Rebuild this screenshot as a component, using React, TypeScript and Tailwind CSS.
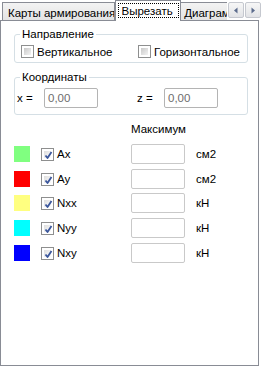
import React from 'react';

const Check: React.FC<{ checked?: boolean }> = ({ checked }) => (
    <span className="relative flex w-[13px] h-[13px] shrink-0 border border-[#8e8f8f] bg-white p-[2px]">
        <span className={`flex-1 bg-linear-to-br ${checked ? 'from-[#dedede] to-[#fbfbfb]' : 'from-[#c9c9c9] to-[#f3f3f3]'}`}></span>
        {checked && (
            <svg className="absolute inset-0" viewBox="0 0 13 13" width={13} height={13}>
                <path d="M3.5 6.5 L5.5 9 L9.5 3" fill="none" stroke="#3a569c" strokeWidth={1.8} strokeLinejoin="round" />
            </svg>
        )}
    </span>
);

const ArrowButton: React.FC<{ dir: 'left' | 'right' }> = ({ dir }) => (
    <div className="w-[16px] h-[16px] flex items-center justify-center border border-[#c5c8cf] rounded-[2px] bg-linear-to-b from-[#f7f7f7] to-[#e2e3e6]">
        <svg width={6} height={7} viewBox="0 0 6 7">
            {dir === 'left'
                ? <path d="M4.5 0.5 L1 3.5 L4.5 6.5 Z" fill="#5b6b8c" />
                : <path d="M1.5 0.5 L5 3.5 L1.5 6.5 Z" fill="#5b6b8c" />}
        </svg>
    </div>
);

const rows = [
    { color: 'bg-[#80ff80]', label: 'Ax', unit: 'см2', mt: 'mt-0' },
    { color: 'bg-[#ff0000]', label: 'Ay', unit: 'см2', mt: 'mt-[5px]' },
    { color: 'bg-[#ffff80]', label: 'Nxx', unit: 'кН', mt: 'mt-[4px]' },
    { color: 'bg-[#00ffff]', label: 'Nyy', unit: 'кН', mt: 'mt-[5px]' },
    { color: 'bg-[#0000ff]', label: 'Nxy', unit: 'кН', mt: 'mt-[5px]' },
];

const CoordInput: React.FC = () => (
    <div className="w-[54px] h-[20px] border border-[#b4b4b4] rounded-[2px] bg-white px-[3px] flex items-center text-[#6d6d6d]">
        0,00
    </div>
);

export default function App() {
    return (
        <div className="w-[261px] h-[367px] bg-white text-black text-[11.5px] leading-[14px] font-['Liberation_Sans',Arial,sans-serif] flex flex-col">
            {/* tab strip */}
            <div className="flex items-end h-[20px]">
                <div className="ml-[2px] w-[113px] h-[18px] border border-b-0 border-[#898c95] bg-linear-to-b from-[#f3f3f3] to-[#e4e4e4] pl-[5px] pt-[3px] whitespace-nowrap overflow-hidden">
                    Карты армирования
                </div>
                <div className="relative z-10 w-[67px] h-[21px] -mb-px border border-b-0 border-[#898c95] bg-white pt-[2px] pl-[2px]">
                    <div className="w-[61px] h-[15px] border border-dotted border-black pl-[3px] whitespace-nowrap">
                        Вырезать
                    </div>
                </div>
                <div className="w-[46px] h-[18px] overflow-hidden border-t border-[#898c95] bg-linear-to-b from-[#f3f3f3] to-[#e4e4e4] pl-[3px] pt-[3px] whitespace-nowrap">
                    Диаграммы
                </div>
                <div className="self-start mt-[2px] ml-[1px] flex gap-px">
                    <ArrowButton dir="left" />
                    <ArrowButton dir="right" />
                </div>
            </div>

            {/* panel */}
            <div className="w-[259px] h-[346px] border border-[#898c95] bg-white">
                <fieldset className="ml-[13px] mt-[6px] w-[234px] border border-[#d5dfe5] rounded-[3px] pb-[4px]">
                    <legend className="ml-[5px] px-[2px] text-black">Направление</legend>
                    <div className="flex items-center mt-[4px] ml-[6px] h-[13px]">
                        <div className="w-[117px] flex items-center gap-[3px]">
                            <Check />
                            <span>Вертикальное</span>
                        </div>
                        <div className="flex items-center gap-[3px]">
                            <Check />
                            <span>Горизонтальное</span>
                        </div>
                    </div>
                </fieldset>

                <fieldset className="ml-[13px] mt-[7px] w-[234px] border border-[#d5dfe5] rounded-[3px] pb-[6px]">
                    <legend className="ml-[5px] px-[2px] text-black">Координаты</legend>
                    <div className="flex items-center mt-[4px] ml-[2px]">
                        <span className="w-[27px]">x =</span>
                        <CoordInput />
                        <span className="ml-[39px] w-[27px]">z =</span>
                        <CoordInput />
                    </div>
                </fieldset>

                <div className="ml-[130px] mt-[7px]">Максимум</div>

                <div className="flex flex-col mt-[8px]">
                    {rows.map((r) => (
                        <div key={r.label} className={`flex items-center h-[20px] ${r.mt}`}>
                            <span className={`ml-[13px] w-[16px] h-[16px] shrink-0 ${r.color}`}></span>
                            <span className="ml-[11px]"><Check checked /></span>
                            <span className="ml-[3px] w-[74px]">{r.label}</span>
                            <div className="w-[54px] h-[20px] border border-[#c9c9c9] rounded-[2px] bg-white"></div>
                            <span className="ml-[11px]">{r.unit}</span>
                        </div>
                    ))}
                </div>
            </div>
        </div>
    );
}
